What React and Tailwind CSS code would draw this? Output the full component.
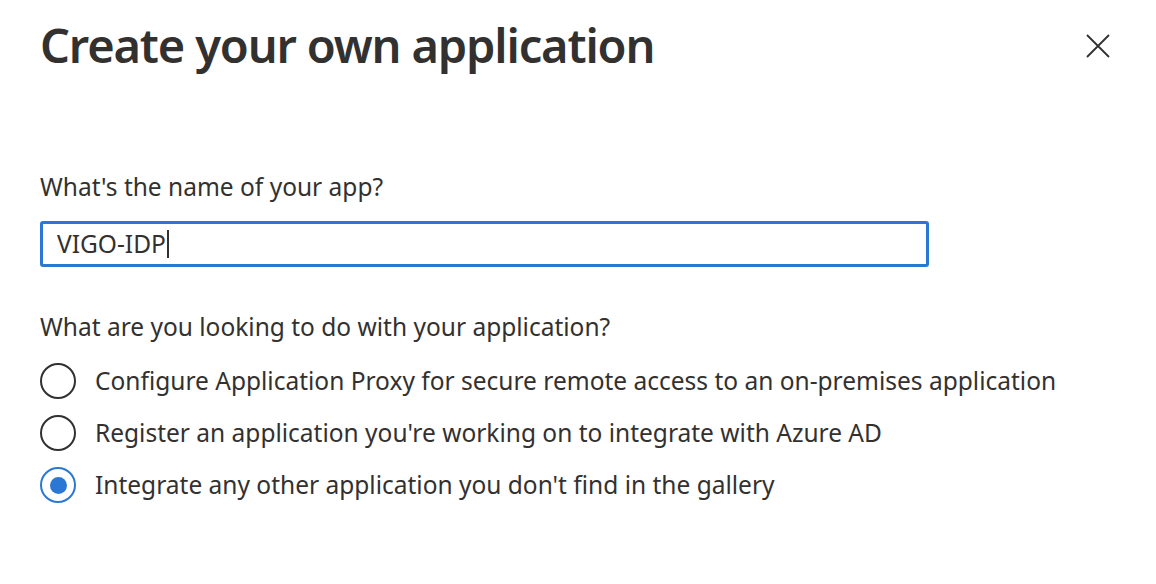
function Radio({ checked, label }) {
  return (
    <label className="flex items-center gap-[19px] h-[52px]">
      <span
        className={
          checked
            ? 'w-9 h-9 rounded-full border-2 border-[#2b78d4] flex items-center justify-center'
            : 'w-9 h-9 rounded-full border-2 border-[#323130]'
        }
      >
        {checked && <span className="w-[17px] h-[17px] rounded-full bg-[#2b78d4]" />}
      </span>
      <span>{label}</span>
    </label>
  );
}

export default function App() {
  return (
    <div className="w-[1156px] h-[584px] bg-white text-[#323130] font-['Noto_Sans',sans-serif] relative">
      <button className="absolute top-[34px] left-[1086px] text-[#323130]">
        <svg width="24" height="24" viewBox="0 0 24 24" stroke="currentColor" strokeWidth="1.8" fill="none">
          <path d="M1 1L23 23M23 1L1 23" />
        </svg>
      </button>
      <div className="pl-10 pt-[10px]">
        <h1 className="text-[47px] font-semibold leading-[70px] tracking-[-1.15px]">Create your own application</h1>
        <div className="mt-[91px] text-[24.5px] leading-[32px]">What's the name of your app?</div>
        <div className="mt-[18px] w-[889px] h-[46px] border-[3px] border-[#2b78d4] rounded-[3px] flex items-center pl-[14px] text-[24.5px]">
          VIGO-IDP<span className="w-[2px] h-[28px] bg-[#323130] ml-[1px]" />
        </div>
        <div className="mt-[44px] text-[24.5px] leading-[32px]">What are you looking to do with your application?</div>
        <div className="mt-[12px] text-[24.5px]">
          <Radio label="Configure Application Proxy for secure remote access to an on-premises application" />
          <Radio label="Register an application you're working on to integrate with Azure AD" />
          <Radio checked label="Integrate any other application you don't find in the gallery" />
        </div>
      </div>
    </div>
  );
}
